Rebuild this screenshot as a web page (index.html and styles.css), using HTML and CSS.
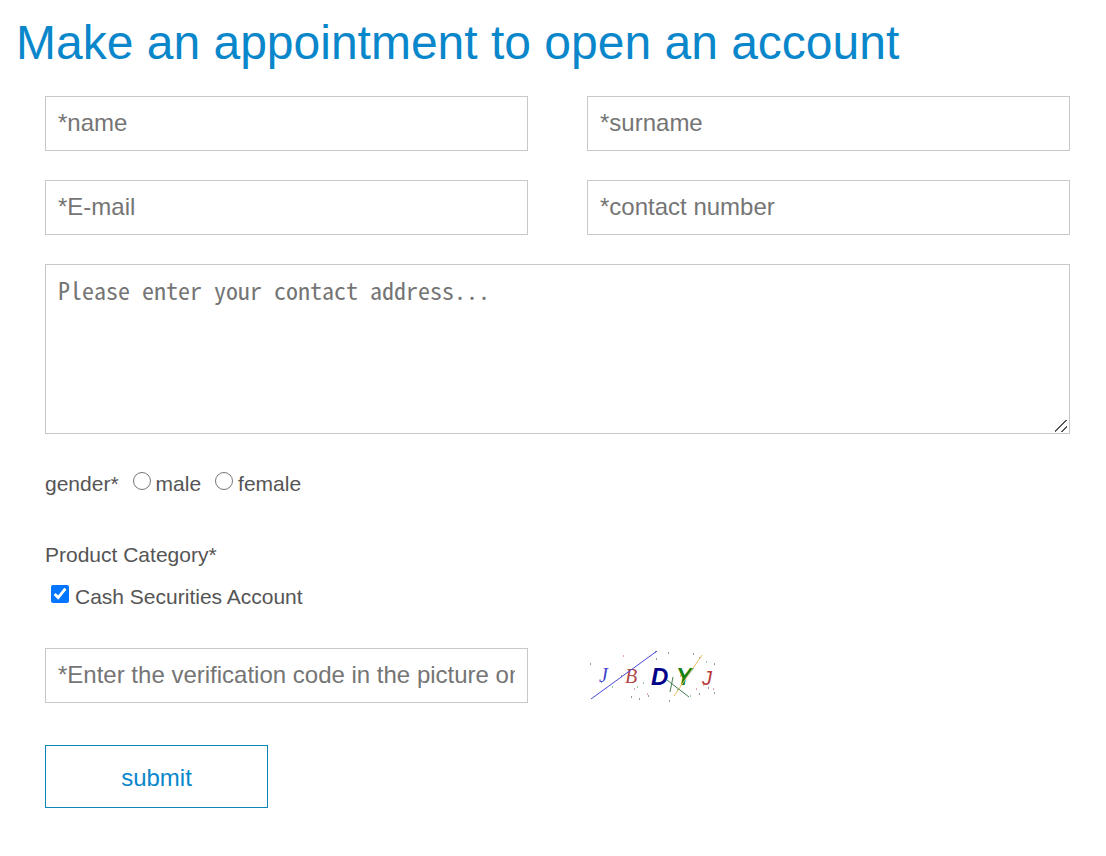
FILE: index.html
```html
<!DOCTYPE html>
<html lang="en">
<head>
  <meta charset="UTF-8" />
  <meta name="viewport" content="width=device-width, initial-scale=1.0" />
  <title>Make an appointment to open an account</title>
  <link rel="stylesheet" href="styles.css">
</head>
<body>
  <h1>Make an appointment to open an account</h1>
  <form class="account-form">
    <div class="field-grid">
      <input type="text" class="field" name="name" placeholder="*name" aria-label="name" />
      <input type="text" class="field" name="surname" placeholder="*surname" aria-label="surname" />
      <input type="email" class="field" name="email" placeholder="*E-mail" aria-label="E-mail" />
      <input type="tel" class="field" name="phone" placeholder="*contact number" aria-label="contact number" />
      <textarea class="field address" name="address" placeholder="Please enter your contact address..." aria-label="contact address"></textarea>
    </div>

    <div class="gender" role="radiogroup" aria-labelledby="genderLabel">
      <span id="genderLabel">gender*</span>
      <label class="option"><input type="radio" name="gender" value="male" />male</label>
      <label class="option"><input type="radio" name="gender" value="female" />female</label>
    </div>

    <div class="category" role="group" aria-labelledby="categoryLabel">
      <div id="categoryLabel">Product Category*</div>
      <label class="option"><input type="checkbox" name="category" value="cash" checked />Cash Securities Account</label>
    </div>

    <div class="field-grid">
      <input type="text" class="field" name="code" placeholder="*Enter the verification code in the picture on the right" aria-label="verification code" />
      <svg class="captcha" viewBox="0 0 130 54" role="img" aria-label="Verification code">
        <g class="noise">
          <path d="M3 16h1M14 34h1M34 28h1M44 49h1M52 51h1M61 48h1M68 4h1M69 11h1M81 5h1M106 6h1M112 10h1M127 16h1M127 45h1M112 46h1M82 53h1M76 34h1M121 40h1" stroke="#263238" />
          <path d="M25 39h1M50 39h1M56 35h1M90 42h1M103 48h1M119 14h1" stroke="#3a9d3a" />
          <path d="M36 8h1M47 41h1M60 46h1M93 28h1M109 41h1M116 37h1M126 41h1" stroke="#d05050" />
        </g>
        <text x="12" y="34" class="glyph serif" fill="#4343cf">J</text>
        <text x="38" y="35" class="glyph serif" fill="#b34848">B</text>
        <text x="64" y="37" class="glyph bold" fill="#000088">D</text>
        <text x="89" y="37" class="glyph bold" fill="#148214">Y</text>
        <text x="115" y="37" class="glyph sans" fill="#b83a3a">J</text>
        <path d="M4 51L70 3" stroke="#4848d8" />
        <path d="M87 48L115 7" stroke="#e8bd68" />
        <path d="M80 32L102 49M83 44L86 29" stroke="#488058" />
      </svg>
    </div>

    <button type="submit" class="submit">submit</button>
  </form>
</body>
</html>
```
FILE: styles.css
```css
* { box-sizing: border-box; }
body {
  margin: 0;
  padding: 15px 16px 48px;
  font-family: Arial, "Liberation Sans", sans-serif;
  font-size: 21px;
  line-height: 42px;
  color: #555;
  background-color: #fff;
}
h1 {
  margin: 0 0 25px;
  font-size: 48px;
  font-weight: normal;
  line-height: 56px;
  color: #0a87cb;
}
.account-form { padding: 0 20px 0 29px; }

/* Fields */
.field-grid {
  display: grid;
  grid-template-columns: 1fr 1fr;
  gap: 29px 59px;
}
.field {
  width: 100%;
  height: 55px;
  margin: 0;
  padding: 0 12px 2px;
  border: 1px solid #c8c8c8;
  border-radius: 0;
  background-color: #fff;
  font-family: inherit;
  font-size: 24px;
  color: #555;
}
.field::placeholder { color: #757575; }
.address {
  grid-column: 1 / -1;
  height: 170px;
  padding: 12px;
  font-family: "Noto Sans Mono CJK JP", "Liberation Mono", monospace;
  line-height: 26px;
  resize: both;
}
.address::-webkit-resizer {
  background: linear-gradient(135deg, transparent 45%, #555 45%, #555 54%, transparent 54%, transparent 73%, #555 73%, #555 82%, transparent 82%) 1px 2px / 12px 12px no-repeat;
}

/* Radio and checkbox groups */
.gender {
  display: flex;
  gap: 14px;
  margin-top: 29px;
}
.category { margin: 29px 0 30px; }
.option {
  display: flex;
  align-items: center;
  width: fit-content;
}
.option input {
  width: 18px;
  height: 18px;
  margin: 0 6px 6px;
}
.gender input { margin: 0 5px 6px 0; }

.captcha {
  width: 130px;
  height: 54px;
  fill: none;
}
.glyph { font-size: 20px; font-style: italic; }
.serif { font-family: "Liberation Serif", serif; }
.sans { font-family: "Liberation Sans", sans-serif; }
.bold {
  font-family: "Liberation Sans Narrow", "Liberation Sans", sans-serif;
  font-size: 24px;
  font-weight: bold;
}

.submit {
  display: block;
  width: 223px;
  height: 63px;
  margin-top: 42px;
  padding: 2px 0 0;
  border: 1px solid #0a87b8;
  background-color: #fff;
  font-family: inherit;
  font-size: 24px;
  color: #0a87cb;
  cursor: pointer;
}
```
